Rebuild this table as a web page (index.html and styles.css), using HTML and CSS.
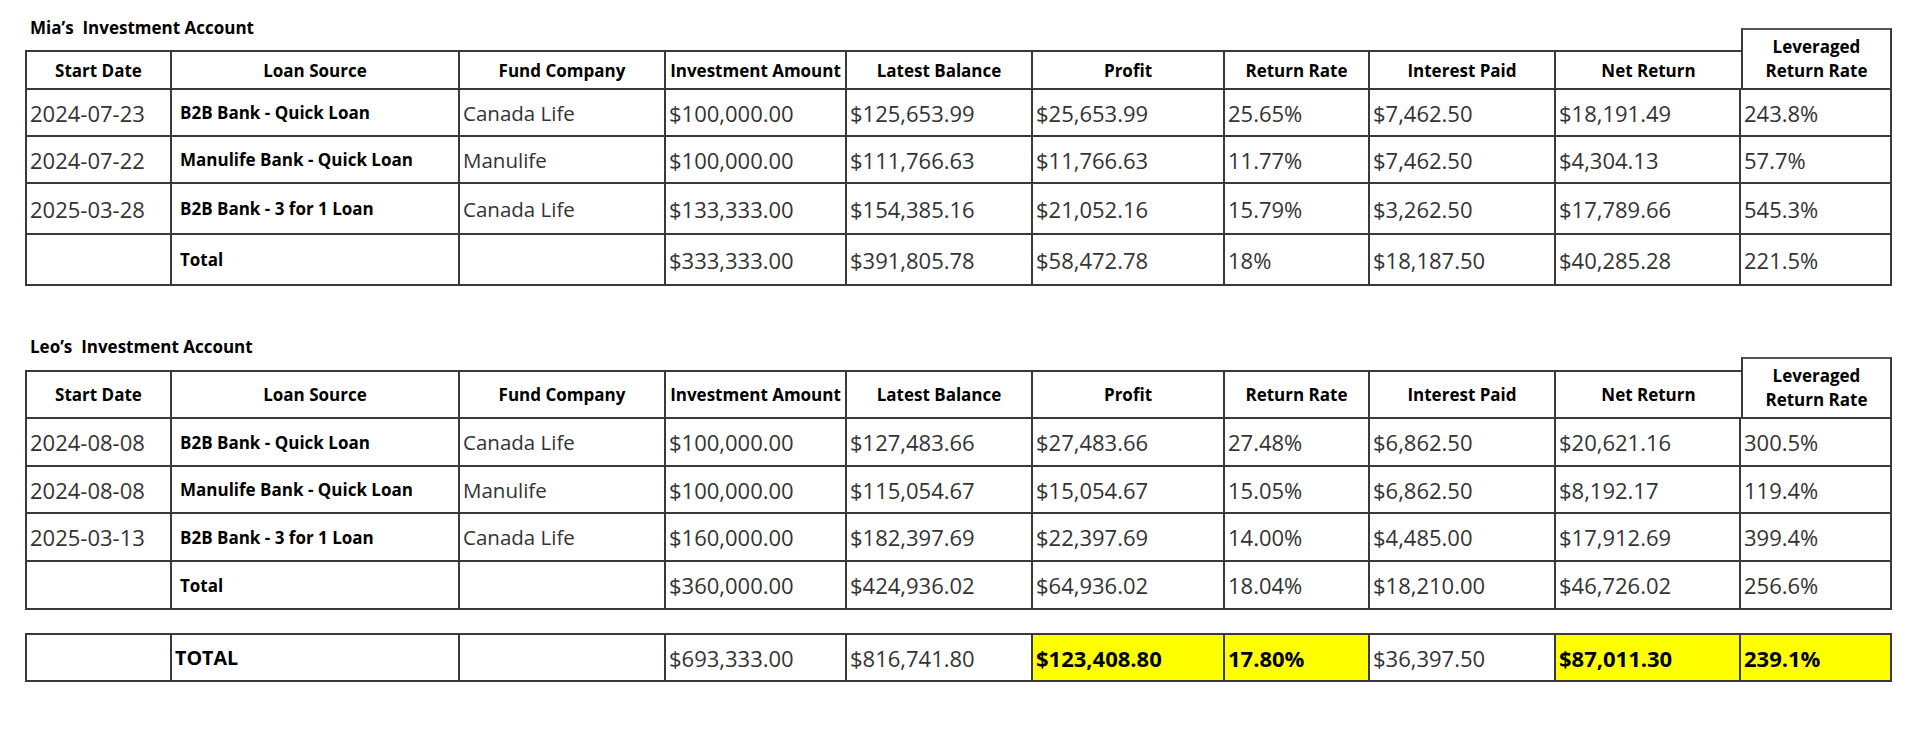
FILE: index.html
```html
<!DOCTYPE html>
<html lang="en">
<head>
<meta charset="utf-8">
<title>Investment Accounts</title>
<link rel="stylesheet" href="styles.css">
</head>
<body>
<div class="page">

  <section class="acct acct-mia">
    <div class="title">Mia’s  Investment Account</div>
    <div class="lev">Leveraged<br>Return Rate</div>
    <div class="hcell first">Start Date</div>
    <div class="hcell">Loan Source</div>
    <div class="hcell">Fund Company</div>
    <div class="hcell">Investment Amount</div>
    <div class="hcell">Latest Balance</div>
    <div class="hcell">Profit</div>
    <div class="hcell">Return Rate</div>
    <div class="hcell">Interest Paid</div>
    <div class="hcell nr">Net Return</div>

    <div class="cell first">2024-07-23</div><div class="cell src">B2B Bank - Quick Loan</div><div class="cell fund">Canada Life</div><div class="cell">$100,000.00</div><div class="cell">$125,653.99</div><div class="cell">$25,653.99</div><div class="cell">25.65%</div><div class="cell">$7,462.50</div><div class="cell">$18,191.49</div><div class="cell">243.8%</div>

    <div class="cell first">2024-07-22</div><div class="cell src">Manulife Bank - Quick Loan</div><div class="cell fund">Manulife</div><div class="cell">$100,000.00</div><div class="cell">$111,766.63</div><div class="cell">$11,766.63</div><div class="cell">11.77%</div><div class="cell">$7,462.50</div><div class="cell">$4,304.13</div><div class="cell">57.7%</div>

    <div class="cell first">2025-03-28</div><div class="cell src">B2B Bank - 3 for 1 Loan</div><div class="cell fund">Canada Life</div><div class="cell">$133,333.00</div><div class="cell">$154,385.16</div><div class="cell">$21,052.16</div><div class="cell">15.79%</div><div class="cell">$3,262.50</div><div class="cell">$17,789.66</div><div class="cell">545.3%</div>

    <div class="cell first"></div><div class="cell src">Total</div><div class="cell fund"></div><div class="cell">$333,333.00</div><div class="cell">$391,805.78</div><div class="cell">$58,472.78</div><div class="cell">18%</div><div class="cell">$18,187.50</div><div class="cell">$40,285.28</div><div class="cell">221.5%</div>
  </section>

  <section class="acct acct-leo">
    <div class="title">Leo’s  Investment Account</div>
    <div class="lev">Leveraged<br>Return Rate</div>
    <div class="hcell first">Start Date</div>
    <div class="hcell">Loan Source</div>
    <div class="hcell">Fund Company</div>
    <div class="hcell">Investment Amount</div>
    <div class="hcell">Latest Balance</div>
    <div class="hcell">Profit</div>
    <div class="hcell">Return Rate</div>
    <div class="hcell">Interest Paid</div>
    <div class="hcell nr">Net Return</div>

    <div class="cell first">2024-08-08</div><div class="cell src">B2B Bank - Quick Loan</div><div class="cell fund">Canada Life</div><div class="cell">$100,000.00</div><div class="cell">$127,483.66</div><div class="cell">$27,483.66</div><div class="cell">27.48%</div><div class="cell">$6,862.50</div><div class="cell">$20,621.16</div><div class="cell">300.5%</div>

    <div class="cell first">2024-08-08</div><div class="cell src">Manulife Bank - Quick Loan</div><div class="cell fund">Manulife</div><div class="cell">$100,000.00</div><div class="cell">$115,054.67</div><div class="cell">$15,054.67</div><div class="cell">15.05%</div><div class="cell">$6,862.50</div><div class="cell">$8,192.17</div><div class="cell">119.4%</div>

    <div class="cell first">2025-03-13</div><div class="cell src">B2B Bank - 3 for 1 Loan</div><div class="cell fund">Canada Life</div><div class="cell">$160,000.00</div><div class="cell">$182,397.69</div><div class="cell">$22,397.69</div><div class="cell">14.00%</div><div class="cell">$4,485.00</div><div class="cell">$17,912.69</div><div class="cell">399.4%</div>

    <div class="cell first"></div><div class="cell src">Total</div><div class="cell fund"></div><div class="cell">$360,000.00</div><div class="cell">$424,936.02</div><div class="cell">$64,936.02</div><div class="cell">18.04%</div><div class="cell">$18,210.00</div><div class="cell">$46,726.02</div><div class="cell">256.6%</div>
  </section>

  <section class="grand">
    <div class="cell first"></div><div class="cell label">TOTAL</div><div class="cell"></div><div class="cell">$693,333.00</div><div class="cell">$816,741.80</div><div class="cell hl">$123,408.80</div><div class="cell hl">17.80%</div><div class="cell">$36,397.50</div><div class="cell hl">$87,011.30</div><div class="cell hl">239.1%</div>
  </section>

</div>
</body>
</html>
```

FILE: styles.css
```css
* {
  box-sizing: border-box;
}

html,
body {
  margin: 0;
  background: #ffffff;
}

body {
  font-family: "Open Sans", "Liberation Sans", sans-serif;
  color: #000;
}

.page {
  padding: 14px 0 0 25px;
}

.acct,
.grand {
  display: grid;
  grid-template-columns: 147px 288px 206px 181px 186px 192px 145px 186px 185px 151px;
}

.acct-mia {
  grid-template-rows: 36px 40px 47px 47px 51px 51px;
}

.acct-leo {
  margin-top: 47px;
  grid-template-rows: 37px 49px 48px 47px 48px 48px;
}

.grand {
  margin-top: 23px;
  grid-template-rows: 49px;
}

.title {
  grid-column: 1 / 10;
  grid-row: 1;
  font-weight: 700;
  font-size: 17px;
  line-height: 20px;
  padding: 4px 0 0 5px;
  white-space: pre;
}

.lev {
  grid-column: 10;
  grid-row: 1 / 3;
  border: 2px solid #3a3a3a;
  border-top-color: #555;
  display: flex;
  flex-direction: column;
  justify-content: center;
  align-items: center;
  text-align: center;
  font-weight: 700;
  font-size: 17px;
  line-height: 24px;
}

.acct-mia .lev {
  margin-top: 14px;
}

.acct-leo .lev {
  margin-top: 24px;
}

.hcell {
  display: flex;
  align-items: center;
  justify-content: center;
  font-weight: 700;
  font-size: 17px;
  white-space: nowrap;
  border-top: 2px solid #3a3a3a;
  border-right: 2px solid #3a3a3a;
  border-bottom: 2px solid #3a3a3a;
}

.hcell.nr {
  border-right: 0;
}

.cell {
  display: flex;
  align-items: center;
  padding-left: 3px;
  font-size: 22px;
  color: #333;
  white-space: nowrap;
  border-right: 2px solid #3a3a3a;
  border-bottom: 2px solid #3a3a3a;
}

.grand .cell {
  border-top: 2px solid #3a3a3a;
}

.first {
  border-left: 2px solid #3a3a3a;
}

.src {
  padding-left: 8px;
  font-size: 17px;
  font-weight: 700;
  color: #000;
}

.fund {
  font-size: 20.5px;
}

.label {
  font-size: 19.7px;
  font-weight: 700;
  color: #000;
}

.hl {
  background: #ffff00;
  font-weight: 700;
  color: #000;
}
```
